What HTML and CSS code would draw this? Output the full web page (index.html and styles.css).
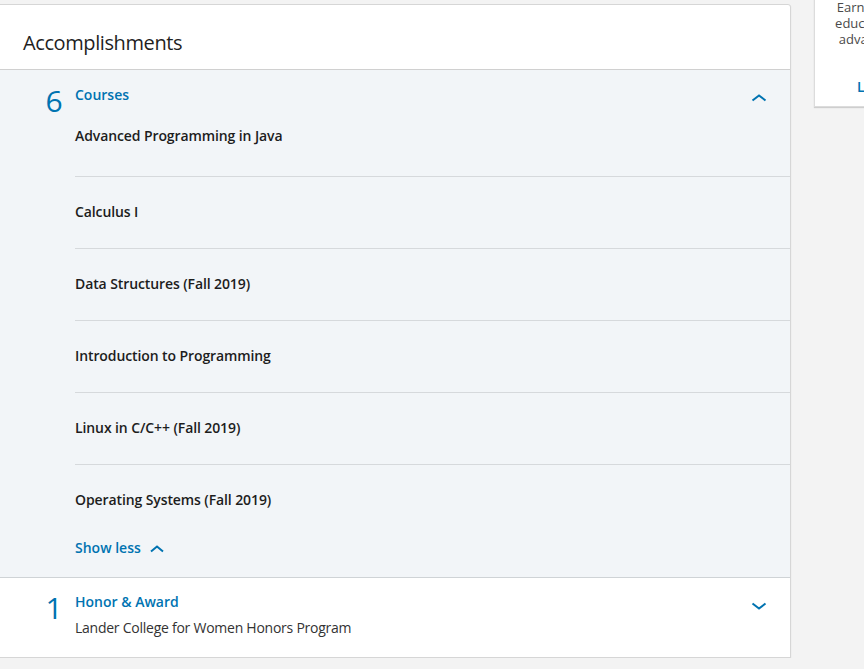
FILE: index.html
```html
<!DOCTYPE html>
<html lang="en">
<head>
<meta charset="utf-8">
<title>Accomplishments</title>
<link rel="stylesheet" href="styles.css">
</head>
<body>
<div class="page">
  <main class="card">
    <header class="card-head">
      <h2 class="card-title">Accomplishments</h2>
    </header>
    <section class="acc acc-open">
      <div class="acc-count">6</div>
      <div class="acc-body">
        <h3 class="acc-title">Courses</h3>
        <ul class="acc-list">
          <li class="acc-item">Advanced Programming in Java</li>
          <li class="acc-item">Calculus I</li>
          <li class="acc-item">Data Structures (Fall 2019)</li>
          <li class="acc-item">Introduction to Programming</li>
          <li class="acc-item">Linux in C/C++ (Fall 2019)</li>
          <li class="acc-item">Operating Systems (Fall 2019)</li>
        </ul>
        <button class="show-less" type="button">Show less
          <svg class="show-less-icon" width="16" height="8" viewBox="0 0 16 8"><polyline points="2,6.5 8,1.5 14,6.5" fill="none" stroke="currentColor" stroke-width="2"/></svg>
        </button>
      </div>
      <button class="acc-toggle" type="button" aria-label="Collapse courses">
        <svg width="16" height="8" viewBox="0 0 16 8"><polyline points="1.5,6.5 8,1.5 14.5,6.5" fill="none" stroke="currentColor" stroke-width="2"/></svg>
      </button>
    </section>
    <section class="acc acc-closed">
      <div class="acc-count">1</div>
      <div class="acc-body">
        <h3 class="acc-title">Honor &amp; Award</h3>
        <p class="acc-desc">Lander College for Women Honors Program</p>
      </div>
      <button class="acc-toggle acc-toggle-down" type="button" aria-label="Expand honors">
        <svg width="16" height="8" viewBox="0 0 16 8"><polyline points="1.5,1.5 8,6.5 14.5,1.5" fill="none" stroke="currentColor" stroke-width="2"/></svg>
      </button>
    </section>
  </main>
  <aside class="side">
    <p class="side-line">Earn a degree in your field,</p>
    <p class="side-line">education that helps you to</p>
    <p class="side-line">advance your career goals</p>
    <a class="side-link" href="#">Learn more about</a>
  </aside>
</div>
</body>
</html>
```
FILE: styles.css
```css
html, body {
  margin: 0;
  padding: 0;
  overflow: hidden;
  background: #f3f3f3;
  font-family: "Open Sans", "Noto Sans", sans-serif;
}

.page {
  display: flex;
  align-items: flex-start;
  gap: 23px;
  padding-top: 4px;
  width: 1200px;
}

.card {
  flex: 0 0 auto;
  width: 790px;
  margin-left: -1px;
  background: #fff;
  border: 1px solid #d6d6d6;
  border-radius: 0 3px 0 0;
  box-shadow: 0 1px 1px rgba(0, 0, 0, 0.18);
}

.card-head {
  height: 64px;
  padding-left: 23px;
  display: flex;
  align-items: center;
  border-bottom: 1px solid #d0d0d0;
}

.card-title {
  margin: 0;
  padding-top: 11px;
  font-size: 20px;
  font-weight: 400;
  color: #1f1f1f;
  letter-spacing: -0.4px;
}

.acc {
  position: relative;
  display: grid;
  grid-template-columns: 38px 32px 1fr;
}

.acc-open {
  background: #f2f5f8;
  padding: 15px 0 19px;
  border-bottom: 1px solid #cfd3d6;
}

.acc-closed {
  padding: 14px 0 19px;
}

.acc-count {
  grid-column: 2;
  text-align: center;
  font-size: 30px;
  line-height: 30px;
  margin-top: 1px;
  color: #0073b1;
  font-weight: 400;
}

.acc-body {
  grid-column: 3;
  padding-left: 5px;
}

.acc-title {
  margin: 0;
  font-size: 14px;
  line-height: 20px;
  font-weight: 600;
  color: #0073b1;
}

.acc-list {
  list-style: none;
  margin: 0;
  padding: 0;
}

.acc-item {
  font-size: 14px;
  line-height: 20px;
  font-weight: 600;
  color: #1d1d1d;
  letter-spacing: -0.1px;
  padding: 25px 0 26px;
  border-top: 1px solid #d6d9dc;
}

.acc-item:first-child {
  border-top: none;
  padding: 21px 0 30px;
}

.show-less {
  display: flex;
  align-items: center;
  gap: 8px;
  margin-top: 2px;
  padding: 0;
  border: none;
  background: none;
  font-family: inherit;
  font-size: 14px;
  line-height: 20px;
  font-weight: 600;
  color: #0073b1;
  cursor: pointer;
}

.show-less-icon {
  display: block;
  margin-top: 1px;
}

.acc-desc {
  margin: 6px 0 0;
  font-size: 14px;
  line-height: 20px;
  color: #333;
  letter-spacing: -0.25px;
}

.acc-toggle {
  position: absolute;
  top: 24px;
  right: 23px;
  padding: 0;
  border: none;
  background: none;
  color: #0073b1;
  line-height: 0;
  cursor: pointer;
}

.acc-toggle svg {
  display: block;
}

.acc-toggle-down {
  top: 24px;
}

.side {
  flex: 0 0 auto;
  width: 206px;
  margin-top: -20px;
  padding: 14px 0 9px;
  background: #fff;
  border: 1px solid #dcdcdc;
  box-shadow: 0 1px 1px rgba(0, 0, 0, 0.15);
  text-align: center;
}

.side-line {
  margin: 0;
  font-size: 13px;
  line-height: 16px;
  color: #4a4a4a;
}

.side-link {
  display: block;
  margin-top: 30px;
  font-size: 14px;
  line-height: 20px;
  font-weight: 600;
  color: #0073b1;
  text-decoration: none;
}
```
